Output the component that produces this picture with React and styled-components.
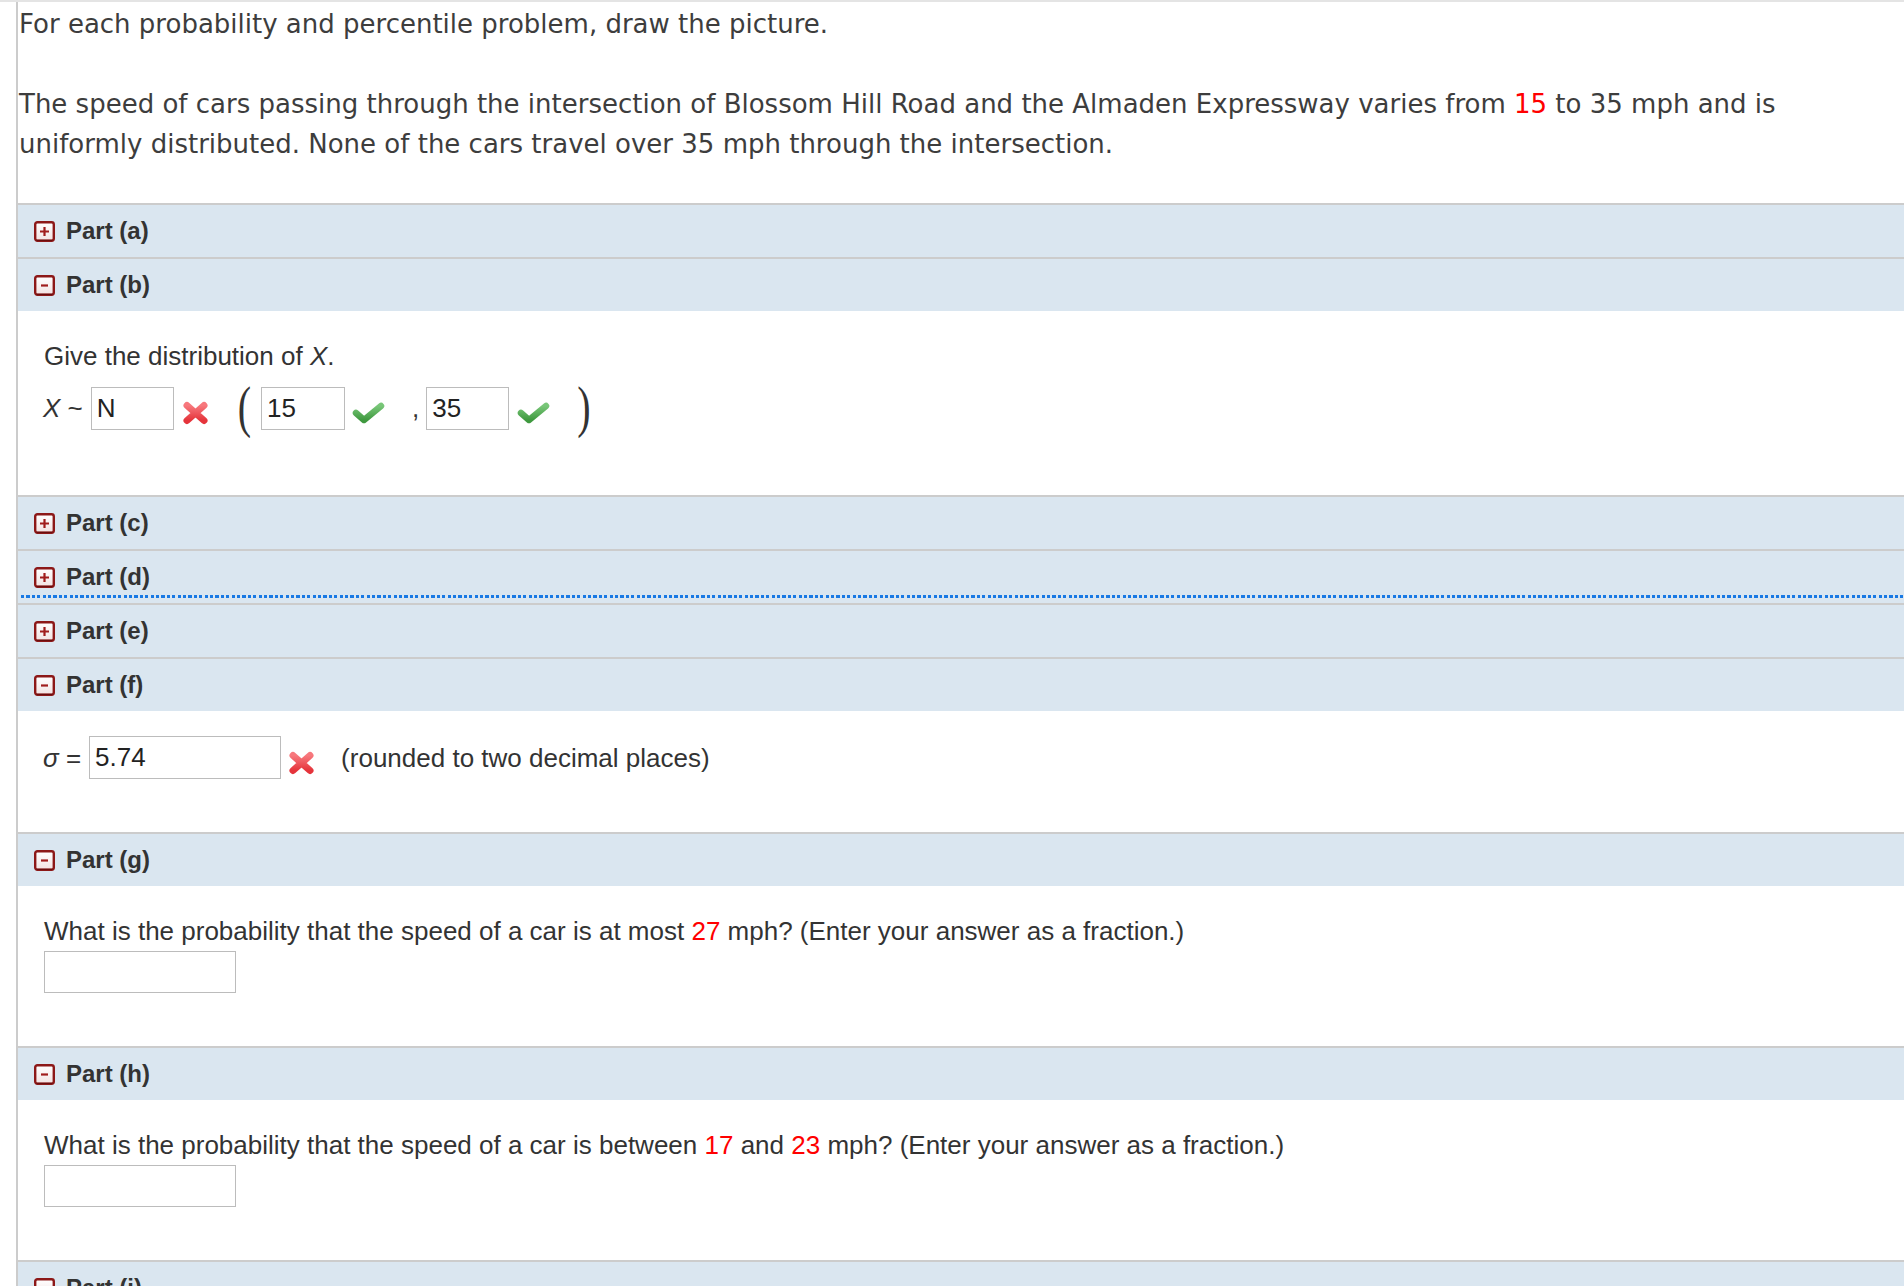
import React from 'react';
import styled, { createGlobalStyle } from 'styled-components';

const GlobalStyle = createGlobalStyle`
  html, body {
    margin: 0;
    padding: 0;
    background: #fff;
    overflow: hidden;
  }
`;

const Page = styled.div`
  border-top: 2px solid #e4e4e4;
  padding-left: 16px;
  min-height: 1290px;
`;

const Sheet = styled.div`
  border-left: 2px solid #cccccc;
  min-height: 1290px;
`;

const Intro = styled.div`
  padding: 2px 0 0 1px;
  font-family: "DejaVu Sans", Verdana, sans-serif;
  font-size: 26px;
  line-height: 40px;
  color: #3d3d3d;
`;

const Para = styled.p`
  margin: 0 0 40px;
  &:last-child {
    margin-bottom: 39px;
  }
`;

const Red = styled.span`
  color: #ff0000;
`;

const Header = styled.div`
  position: relative;
  display: flex;
  align-items: center;
  gap: 11px;
  height: 52px;
  padding-left: 16px;
  border-top: 2px solid #cccccc;
  background: #dae6f0;
  font-family: "Liberation Sans", Arial, sans-serif;
  font-weight: bold;
  font-size: 24px;
  color: #333;

  ${p => p.$focused && `
    &::after {
      content: "";
      position: absolute;
      left: 3px;
      right: 0;
      bottom: 5px;
      height: 3px;
      background: repeating-linear-gradient(90deg, #1879e4 0 3.2px, transparent 3.2px 5.4px);
    }
  `}
`;

const Content = styled.div`
  padding: ${p => p.$pt ?? 30}px 26px 53px;
  font-family: "Liberation Sans", Arial, sans-serif;
  font-size: 26px;
  color: #333;
  background: #fff;
`;

const Question = styled.div`
  line-height: 30px;
  height: 30px;
  white-space: nowrap;
`;

const Row = styled.div`
  display: flex;
  align-items: center;
  height: ${p => p.$h ?? 43}px;
  margin-top: ${p => p.$mt ?? 0}px;
  margin-bottom: ${p => p.$mb ?? 0}px;
  white-space: nowrap;
`;

const Label = styled.span`
  margin-right: ${p => p.$mr ?? 8}px;
  margin-left: ${p => p.$ml ?? 0}px;
  line-height: 30px;
`;

const Var = styled.i`
  font-style: italic;
`;

const Box = styled.input`
  box-sizing: border-box;
  width: ${p => p.$w}px;
  height: 43px;
  margin: 0;
  padding: 0 5px;
  border: 1px solid #bcbcbc;
  border-radius: 0;
  background: #fff;
  font-family: "Liberation Sans", Arial, sans-serif;
  font-size: 26px;
  color: #222;
  outline: none;
`;

const AnswerBox = styled(Box)`
  display: block;
  margin-top: 5px;
  height: 42px;
`;

const Paren = styled.span`
  display: inline-block;
  font-family: "Liberation Serif", "Times New Roman", serif;
  font-size: 40px;
  line-height: 40px;
  color: #333;
  transform: scaleY(1.42);
  margin: ${p => p.$m};
`;

const IconSlot = styled.span`
  display: inline-flex;
  margin: ${p => p.$m};
`;

function ToggleIcon({ open }) {
  const id = open ? 'tg-o' : 'tg-c';
  return (
    <svg width="21" height="21" viewBox="0 0 21 21">
      <defs>
        <linearGradient id={id} x1="0" y1="0" x2="0" y2="1">
          <stop offset="0" stopColor="#ffffff" />
          <stop offset="1" stopColor="#f2e2e2" />
        </linearGradient>
      </defs>
      <rect x="1.2" y="1.2" width="18.6" height="18.6" rx="2.2" fill={`url(#${id})`} stroke="#8c1818" strokeWidth="2.4" />
      <path d="M2.5 19.4h16" stroke="#6a0e0e" strokeWidth="1.2" />
      {open ? (
        <path d="M7 10.5h7" stroke="#a01c1c" strokeWidth="2.2" />
      ) : (
        <path d="M6 10.5h9M10.5 6v9" stroke="#a01c1c" strokeWidth="2.2" />
      )}
    </svg>
  );
}

function WrongIcon() {
  return (
    <svg width="27" height="24" viewBox="0 0 27 24">
      <defs>
        <linearGradient id="wrong-g" x1="0" y1="0" x2="0" y2="1">
          <stop offset="0" stopColor="#f7787d" />
          <stop offset="1" stopColor="#e5343b" />
        </linearGradient>
      </defs>
      <path d="M5 4.5L22 19.5M22 4.5L5 19.5" stroke="url(#wrong-g)" strokeWidth="7" strokeLinecap="round" />
    </svg>
  );
}

function RightIcon() {
  return (
    <svg width="33" height="23" viewBox="0 0 33 23">
      <defs>
        <linearGradient id="right-g" x1="0" y1="0" x2="0" y2="1">
          <stop offset="0" stopColor="#78c678" />
          <stop offset="1" stopColor="#3f993f" />
        </linearGradient>
      </defs>
      <path d="M4 12L12 19L29 5" fill="none" stroke="url(#right-g)" strokeWidth="6.5" strokeLinecap="round" strokeLinejoin="round" />
    </svg>
  );
}

function PartHeader({ label, open, focused }) {
  return (
    <Header $focused={focused}>
      <ToggleIcon open={open} />
      <span>{label}</span>
    </Header>
  );
}

export default function App() {
  return (
    <>
      <GlobalStyle />
      <Page>
        <Sheet>
          <Intro>
            <Para>For each probability and percentile problem, draw the picture.</Para>
            <Para>
              The speed of cars passing through the intersection of Blossom Hill Road and the Almaden
              Expressway varies from <Red>15</Red> to 35 mph and is uniformly distributed. None of the
              cars travel over 35 mph through the intersection.
            </Para>
          </Intro>

          <PartHeader label="Part (a)" />
          <PartHeader label="Part (b)" open />
          <Content>
            <Question>Give the distribution of <Var>X</Var>.</Question>
            <Row $h={54} $mt={10} $mb={7}>
              <Label $ml={-1}><Var>X</Var> ~</Label>
              <Box $w={83} defaultValue="N" readOnly />
              <IconSlot $m="9px 0 0 8px"><WrongIcon /></IconSlot>
              <Paren $m="0 10px 0 29px">(</Paren>
              <Box $w={84} defaultValue="15" readOnly />
              <IconSlot $m="9px 0 0 7px"><RightIcon /></IconSlot>
              <Label $ml={27} $mr={7}>,</Label>
              <Box $w={83} defaultValue="35" readOnly />
              <IconSlot $m="9px 0 0 8px"><RightIcon /></IconSlot>
              <Paren $m="0 0 0 27px">)</Paren>
            </Row>
          </Content>

          <PartHeader label="Part (c)" />
          <PartHeader label="Part (d)" focused />
          <PartHeader label="Part (e)" />
          <PartHeader label="Part (f)" open />
          <Content $pt={25}>
            <Row>
              <Label $ml={-1}><Var>σ</Var> =</Label>
              <Box $w={192} defaultValue="5.74" readOnly />
              <IconSlot $m="10px 0 0 7px"><WrongIcon /></IconSlot>
              <Label $ml={26}>(rounded to two decimal places)</Label>
            </Row>
          </Content>

          <PartHeader label="Part (g)" open />
          <Content>
            <Question>
              What is the probability that the speed of a car is at most <Red>27</Red> mph? (Enter your answer as a fraction.)
            </Question>
            <AnswerBox $w={192} readOnly />
          </Content>

          <PartHeader label="Part (h)" open />
          <Content>
            <Question>
              What is the probability that the speed of a car is between <Red>17</Red> and <Red>23</Red> mph? (Enter your answer as a fraction.)
            </Question>
            <AnswerBox $w={192} readOnly />
          </Content>

          <PartHeader label="Part (i)" open />
          <Content>
            <Question>&nbsp;</Question>
          </Content>
        </Sheet>
      </Page>
    </>
  );
}
